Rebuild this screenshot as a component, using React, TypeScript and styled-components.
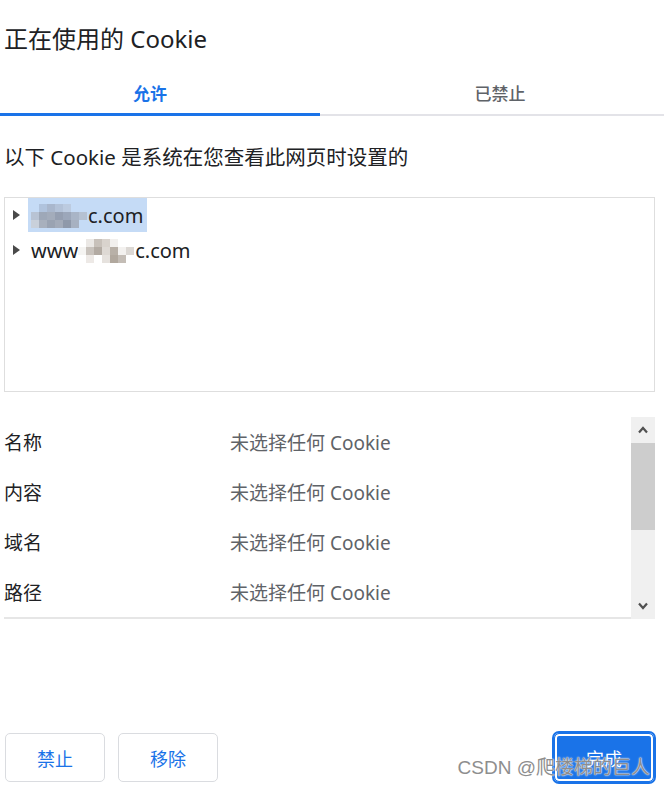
import React from "react";
import styled, { createGlobalStyle } from "styled-components";

const Global = createGlobalStyle`
  html, body { margin: 0; padding: 0; background: #ffffff; }
  * { box-sizing: border-box; }
  body { font-family: "Noto Sans", "Noto Sans CJK SC", sans-serif; color: #202124; }
`;

const Dialog = styled.div`
  position: relative;
  width: 664px;
  height: 100vh;
  display: flex;
  flex-direction: column;
  background: #fff;
  overflow: hidden;
`;

const Title = styled.h1`
  margin: 0;
  padding: 24px 0 0 4px;
  font-size: 24px;
  line-height: 30px;
  font-weight: 400;
  color: #202124;
`;

const TabBar = styled.div`
  display: grid;
  grid-template-columns: 320px 1fr;
  margin-top: 18px;
  border-bottom: 2px solid #e3e3e8;
`;

const Tab = styled.div<{ $active?: boolean; $pl?: number; $pr?: number }>`
  height: 44px;
  margin-bottom: -2px;
  display: flex;
  align-items: center;
  justify-content: center;
  padding-left: ${(p) => p.$pl ?? 0}px;
  padding-right: ${(p) => p.$pr ?? 0}px;
  font-size: 17px;
  font-weight: ${(p) => (p.$active ? 600 : 500)};
  color: ${(p) => (p.$active ? "#1a73e8" : "#5f6368")};
  border-bottom: 3px solid ${(p) => (p.$active ? "#1a73e8" : "transparent")};
`;

const Body = styled.div`
  flex: 1;
  display: flex;
  flex-direction: column;
  padding: 0 9px 0 4px;
`;

const Description = styled.p`
  margin: 27px 0 0;
  font-size: 20.5px;
  line-height: 28px;
  color: #202124;
`;

const TreeBox = styled.div`
  margin-top: 26px;
  height: 195px;
  border: 1px solid #dedede;
  display: flex;
  flex-direction: column;
`;

const TreeRow = styled.div`
  height: 35px;
  display: flex;
  align-items: flex-start;
  padding-left: 8px;
`;

const Arrow = styled.span`
  width: 0;
  height: 0;
  margin-top: 12px;
  border-top: 5px solid transparent;
  border-bottom: 5px solid transparent;
  border-left: 7px solid #4a4a4a;
`;

const NodeLabel = styled.span<{ $selected?: boolean }>`
  margin-left: 8px;
  height: 34px;
  padding: 0 4px 0 3px;
  display: inline-flex;
  align-items: center;
  font-size: 20px;
  color: #202124;
  background: ${(p) => (p.$selected ? "#c5dbf6" : "transparent")};
`;

const Mosaic = styled.span<{ $cols: number }>`
  display: inline-grid;
  grid-template-columns: repeat(${(p) => p.$cols}, 8px);
  grid-auto-rows: 8px;
  margin: 2px 1px 0 0;
  filter: blur(0.6px);
`;

const Cell = styled.span<{ $c: string }>`
  background: ${(p) => p.$c};
`;

const Details = styled.div`
  margin-top: 25px;
  display: flex;
  height: 203px;
`;

const Rows = styled.div`
  flex: 1;
  border-bottom: 2px solid #e6e6e6;
  align-self: flex-start;
`;

const DetailRow = styled.div`
  height: 50px;
  display: grid;
  grid-template-columns: 226px 1fr;
  align-items: center;
  font-size: 19px;
`;

const Label = styled.span`
  color: #202124;
`;

const Value = styled.span`
  color: #5f6368;
`;

const Scrollbar = styled.div`
  width: 24px;
  height: 202px;
  background: #f0f0f0;
  display: flex;
  flex-direction: column;
  align-items: center;
`;

const ScrollBtn = styled.div`
  height: 26px;
  width: 100%;
  display: flex;
  align-items: center;
  justify-content: center;
`;

const Thumb = styled.div`
  width: 100%;
  height: 87px;
  background: #cdcdcd;
`;

const Spacer = styled.div`
  flex: 1;
`;

const Footer = styled.div`
  margin-top: auto;
  padding: 0 0 7px 1px;
  display: flex;
  align-items: center;
  gap: 13px;
`;

const Button = styled.button<{ $primary?: boolean }>`
  width: 100px;
  height: 49px;
  border-radius: 5px;
  font-family: "Noto Sans CJK SC", "Noto Sans", sans-serif;
  font-size: 18px;
  border: 1px solid ${(p) => (p.$primary ? "#1a73e8" : "#dadce0")};
  background: ${(p) => (p.$primary ? "#1a73e8" : "#ffffff")};
  color: ${(p) => (p.$primary ? "#ffffff" : "#1a73e8")};
  ${(p) =>
    p.$primary
      ? `margin-left: auto; margin-right: 1px; outline: 2px solid #1a73e8; outline-offset: 0px; box-shadow: inset 0 0 0 2px #ffffff;`
      : ""}
`;

const Watermark = styled.div`
  position: absolute;
  right: 14px;
  bottom: 9px;
  font-family: "Liberation Sans", "Noto Sans CJK SC", sans-serif;
  font-size: 19px;
  line-height: 24px;
  color: #8e8e8e;
  text-shadow: 0 0 2px #fff, 0 0 1px #fff;
  pointer-events: none;
`;

const Chevron = ({ up }: { up?: boolean }) => (
  <svg width="10" height="8" viewBox="0 0 10 8">
    <path
      d={up ? "M1 6.5 L5 2 L9 6.5" : "M1 1.5 L5 6 L9 1.5"}
      fill="none"
      stroke="#505050"
      strokeWidth="2.2"
    />
  </svg>
);

const mosaic1 = [
  "#c5dbf6", "#b0c3dd", "#a9b7cd", "#b3c2d8", "#bccbe0", "#c5dbf6", "#c5dbf6",
  "#b8c3d4", "#9ea8b8", "#a3acbb", "#959fb1", "#9ca7ba", "#a9b5c7", "#b5c1d2",
  "#c9d0da", "#a8b0bd", "#9aa3b2", "#a3abb9", "#8f99aa", "#a7b1c1", "#c5dbf6",
];
const mosaic2 = [
  "#ffffff", "#ebe8e5", "#c8c1ba", "#d9d3cd", "#f2f0ee", "#ffffff", "#ffffff",
  "#f5f4f2", "#c9c3bd", "#b3aba3", "#ded9d4", "#b8b0a7", "#f3f1ef", "#dcd8d4",
  "#ffffff", "#ede9e6", "#ffffff", "#e6e2de", "#b1a89e", "#c4bdb6", "#ffffff",
];

const details = ["名称", "内容", "域名", "路径"];

export default function App() {
  return (
    <>
      <Global />
      <Dialog>
        <Title>正在使用的 Cookie</Title>
        <TabBar>
          <Tab $active $pr={20}>允许</Tab>
          <Tab $pl={16}>已禁止</Tab>
        </TabBar>
        <Body>
          <Description>以下 Cookie 是系统在您查看此网页时设置的</Description>
          <TreeBox>
            <TreeRow>
              <Arrow />
              <NodeLabel $selected>
                <Mosaic $cols={7}>
                  {mosaic1.map((c, i) => (
                    <Cell key={i} $c={c} />
                  ))}
                </Mosaic>
                c.com
              </NodeLabel>
            </TreeRow>
            <TreeRow>
              <Arrow />
              <NodeLabel>
                www
                <Mosaic $cols={7}>
                  {mosaic2.map((c, i) => (
                    <Cell key={i} $c={c} />
                  ))}
                </Mosaic>
                c.com
              </NodeLabel>
            </TreeRow>
          </TreeBox>
          <Details>
            <Rows>
              {details.map((d) => (
                <DetailRow key={d}>
                  <Label>{d}</Label>
                  <Value>未选择任何 Cookie</Value>
                </DetailRow>
              ))}
            </Rows>
            <Scrollbar>
              <ScrollBtn>
                <Chevron up />
              </ScrollBtn>
              <Thumb />
              <Spacer />
              <ScrollBtn>
                <Chevron />
              </ScrollBtn>
            </Scrollbar>
          </Details>
          <Footer>
            <Button>禁止</Button>
            <Button>移除</Button>
            <Button $primary>完成</Button>
          </Footer>
        </Body>
        <Watermark>CSDN @爬楼梯的巨人</Watermark>
      </Dialog>
    </>
  );
}
